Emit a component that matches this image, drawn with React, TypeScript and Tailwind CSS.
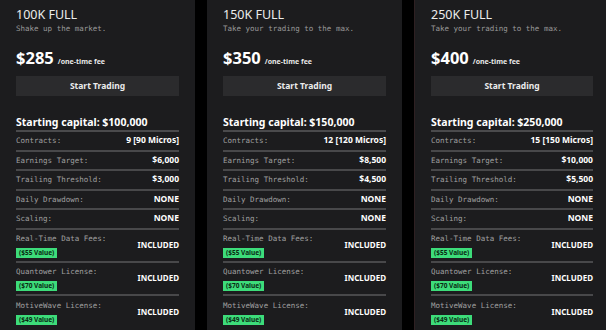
import React from "react";

type Row = { label: string; value: string; badge?: string };

const plans = [
  {
    title: "100K FULL",
    sub: "Shake up the market.",
    price: "$285",
    capital: "$100,000",
    contracts: "9 [90 Micros]",
    target: "$6,000",
    trailing: "$3,000",
  },
  {
    title: "150K FULL",
    sub: "Take your trading to the max.",
    price: "$350",
    capital: "$150,000",
    contracts: "12 [120 Micros]",
    target: "$8,500",
    trailing: "$4,500",
  },
  {
    title: "250K FULL",
    sub: "Take your trading to the max.",
    price: "$400",
    capital: "$250,000",
    contracts: "15 [150 Micros]",
    target: "$10,000",
    trailing: "$5,500",
  },
];

const sans = "font-['Noto_Sans','Open_Sans',sans-serif]";
const mono = "font-['DejaVu_Sans_Mono','Liberation_Mono',monospace]";

function Card({ p, accent }: { p: (typeof plans)[number]; accent?: boolean }) {
  const rows: Row[] = [
    { label: "Contracts:", value: p.contracts },
    { label: "Earnings Target:", value: p.target },
    { label: "Trailing Threshold:", value: p.trailing },
    { label: "Daily Drawdown:", value: "NONE" },
    { label: "Scaling:", value: "NONE" },
  ];
  const tall: Row[] = [
    { label: "Real-Time Data Fees:", value: "INCLUDED", badge: "($55 Value)" },
    { label: "Quantower License:", value: "INCLUDED", badge: "($70 Value)" },
    { label: "MotiveWave License:", value: "INCLUDED", badge: "($49 Value)" },
  ];
  return (
    <div
      className={`bg-[#1c1c1e] h-[330px] px-4 pt-[7px] ${sans} ${
        accent ? "border-l border-[#2e2022]" : ""
      }`}
    >
      <div className="text-[12.5px] leading-[16px] text-[#ececec]">{p.title}</div>
      <div className={`${mono} text-[7.5px] leading-[10px] text-[#9a9a9a] mt-[1px]`}>{p.sub}</div>
      <div className="flex items-baseline mt-[12px] h-[24px]">
        <span className="text-[16.5px] font-bold leading-[24px] text-white">{p.price}</span>
        <span className="text-[7px] font-bold text-[#e8e8e8] ml-[4px]">/one-time fee</span>
      </div>
      <div className="mt-[6px] h-[20px] bg-[#2b2b2d] flex items-center justify-center text-[8.5px] font-bold text-[#ececec]">
        Start Trading
      </div>
      <div className="mt-[19px] text-[10.5px] font-bold leading-[14px] text-white border-b-2 border-[#4a4a4c] pb-[1px]">
        Starting capital: {p.capital}
      </div>
      {rows.map((r) => (
        <div
          key={r.label}
          className="h-[19.5px] flex items-center justify-between border-b-2 border-[#48484a]"
        >
          <span className={`${mono} text-[7.5px] text-[#a0a0a0]`}>{r.label}</span>
          <span className="text-[8.5px] font-bold text-white">{r.value}</span>
        </div>
      ))}
      {tall.map((r, i) => (
        <div
          key={r.label}
          className={`h-[33px] flex items-center justify-between ${
            i < 2 ? "border-b-2 border-[#48484a]" : ""
          }`}
        >
          <div className="flex flex-col items-start pt-[1px]">
            <span className={`${mono} text-[7.5px] leading-[10px] text-[#a0a0a0]`}>{r.label}</span>
            <span className="mt-[4px] bg-[#3ddc7a] text-[#0a2a14] text-[6.5px] font-bold px-[3px] h-[10px] leading-[10px] inline-block">
              {r.badge}
            </span>
          </div>
          <span className="text-[8px] font-bold text-white">{r.value}</span>
        </div>
      ))}
    </div>
  );
}

export default function App() {
  return (
    <div className="w-[606px] h-[330px] bg-black overflow-hidden">
      <div className="w-[609px] grid grid-cols-[195px_195px_195px] gap-[12px]">
        {plans.map((p, i) => (
          <Card key={p.title} p={p} accent={i === 2} />
        ))}
      </div>
    </div>
  );
}
